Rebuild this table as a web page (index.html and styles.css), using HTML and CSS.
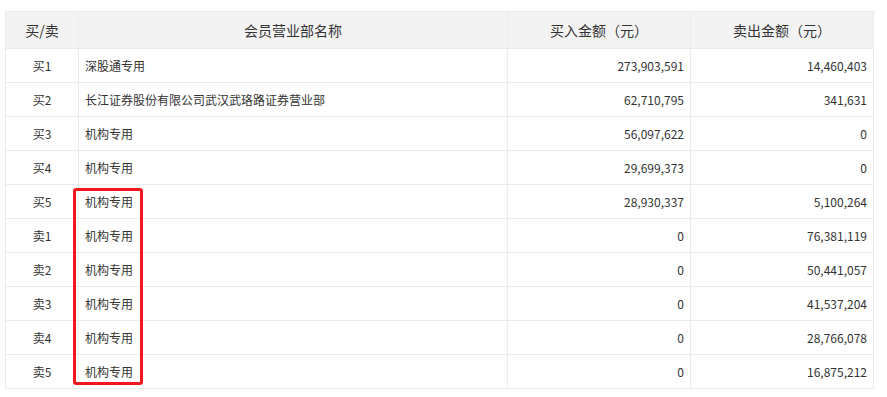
FILE: index.html
```html
<!DOCTYPE html>
<html lang="zh">
<head>
<meta charset="utf-8">
<link rel="stylesheet" href="styles.css">
</head>
<body>
<div class="wrap">
<table class="lhb">
<colgroup><col class="c1"><col class="c2"><col class="c3"><col class="c4"></colgroup>
<thead>
<tr><th>买/卖</th><th>会员营业部名称</th><th>买入金额（元）</th><th>卖出金额（元）</th></tr>
</thead>
<tbody>
<tr><td class="side">买1</td><td class="name">深股通专用</td><td class="num">273,903,591</td><td class="num">14,460,403</td></tr>
<tr><td class="side">买2</td><td class="name">长江证券股份有限公司武汉武珞路证券营业部</td><td class="num">62,710,795</td><td class="num">341,631</td></tr>
<tr><td class="side">买3</td><td class="name">机构专用</td><td class="num">56,097,622</td><td class="num">0</td></tr>
<tr><td class="side">买4</td><td class="name">机构专用</td><td class="num">29,699,373</td><td class="num">0</td></tr>
<tr><td class="side">买5</td><td class="name">机构专用</td><td class="num">28,930,337</td><td class="num">5,100,264</td></tr>
<tr><td class="side">卖1</td><td class="name">机构专用</td><td class="num">0</td><td class="num">76,381,119</td></tr>
<tr><td class="side">卖2</td><td class="name">机构专用</td><td class="num">0</td><td class="num">50,441,057</td></tr>
<tr><td class="side">卖3</td><td class="name">机构专用</td><td class="num">0</td><td class="num">41,537,204</td></tr>
<tr><td class="side">卖4</td><td class="name">机构专用</td><td class="num">0</td><td class="num">28,766,078</td></tr>
<tr><td class="side">卖5</td><td class="name">机构专用</td><td class="num">0</td><td class="num">16,875,212</td></tr>
</tbody>
</table>
<div class="mark"></div>
</div>
</body>
</html>
```
FILE: styles.css
```css
html, body { margin: 0; padding: 0; background: #fff; }
body {
  font-family: "Microsoft YaHei", "Noto Sans CJK SC", sans-serif;
  font-size: 12px;
  color: #333;
}
.wrap {
  position: relative;
  padding: 11px 0 0 5px;
  width: 869px;
}
.lhb {
  border-collapse: collapse;
  table-layout: fixed;
  width: 869px;
}
.c1 { width: 73px; }
.c2 { width: 429px; }
.c3 { width: 183px; }
.c4 { width: 183px; }
.lhb th, .lhb td {
  border: 1px solid #ebebeb;
  padding: 0 6px;
  white-space: nowrap;
  font-weight: normal;
}
.lhb th {
  background: #f3f3f3;
  height: 36px;
  text-align: center;
  font-size: 14px;
}
.lhb td { height: 33px; }
.side { text-align: center; }
.name { text-align: left; }
.num { text-align: right; }
.mark {
  position: absolute;
  left: 73px;
  top: 188px;
  width: 64px;
  height: 191px;
  border: 3px solid #f5171d;
  border-radius: 3px;
}
```
